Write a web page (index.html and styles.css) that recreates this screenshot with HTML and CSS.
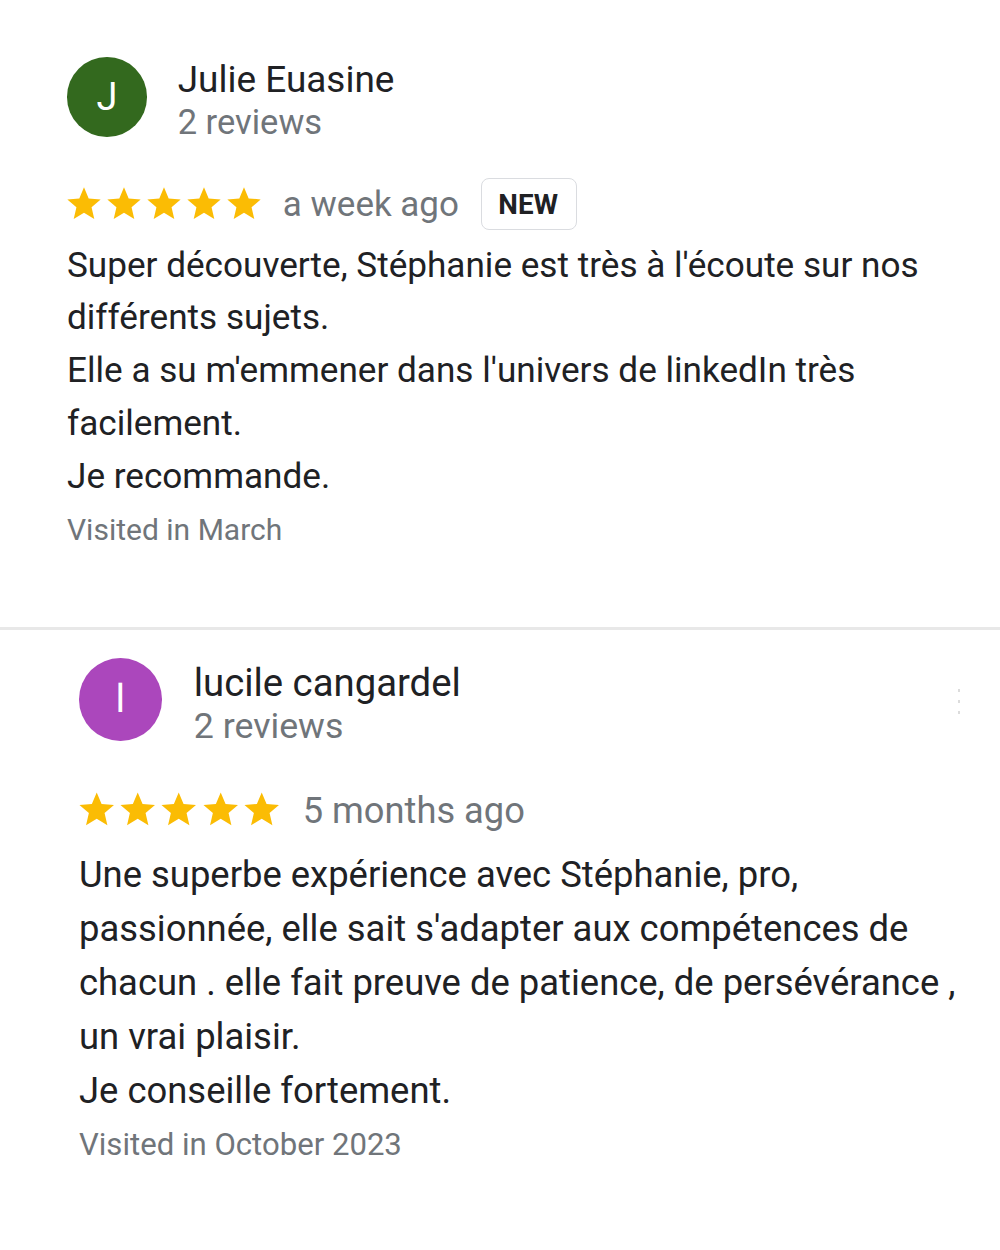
FILE: index.html
```html
<!DOCTYPE html>
<html lang="fr">
<head>
    <meta charset="UTF-8">
    <meta name="viewport" content="width=device-width, initial-scale=1.0">
    <title>Avis</title>
    <link rel="stylesheet" href="styles.css">
</head>
<body>

<div class="review">
    <div class="review-head">
        <div class="avatar avatar-green">J</div>
        <div class="author">
            <div class="author-name">Julie Euasine</div>
            <div class="author-count">2 reviews</div>
        </div>
    </div>
    <div class="rating">
        <div class="stars">
            <svg viewBox="0 0 24 24"><path d="M12 17.27L18.18 21l-1.64-7.03L22 9.24l-7.19-.61L12 2 9.19 8.63 2 9.24l5.46 4.73L5.82 21z"/></svg>
            <svg viewBox="0 0 24 24"><path d="M12 17.27L18.18 21l-1.64-7.03L22 9.24l-7.19-.61L12 2 9.19 8.63 2 9.24l5.46 4.73L5.82 21z"/></svg>
            <svg viewBox="0 0 24 24"><path d="M12 17.27L18.18 21l-1.64-7.03L22 9.24l-7.19-.61L12 2 9.19 8.63 2 9.24l5.46 4.73L5.82 21z"/></svg>
            <svg viewBox="0 0 24 24"><path d="M12 17.27L18.18 21l-1.64-7.03L22 9.24l-7.19-.61L12 2 9.19 8.63 2 9.24l5.46 4.73L5.82 21z"/></svg>
            <svg viewBox="0 0 24 24"><path d="M12 17.27L18.18 21l-1.64-7.03L22 9.24l-7.19-.61L12 2 9.19 8.63 2 9.24l5.46 4.73L5.82 21z"/></svg>
        </div>
        <span class="date">a week ago</span>
        <span class="badge">NEW</span>
    </div>
    <p class="text">Super découverte, Stéphanie est très à l'écoute sur nos différents sujets.<br>Elle a su m'emmener dans l'univers de linkedIn très facilement.<br>Je recommande.</p>
    <div class="visited">Visited in March</div>
</div>

<div class="review review-second">
    <div class="review-head">
        <div class="avatar avatar-purple">l</div>
        <div class="author">
            <div class="author-name">lucile cangardel</div>
            <div class="author-count">2 reviews</div>
        </div>
        <div class="menu"><span></span><span></span><span></span></div>
    </div>
    <div class="rating">
        <div class="stars">
            <svg viewBox="0 0 24 24"><path d="M12 17.27L18.18 21l-1.64-7.03L22 9.24l-7.19-.61L12 2 9.19 8.63 2 9.24l5.46 4.73L5.82 21z"/></svg>
            <svg viewBox="0 0 24 24"><path d="M12 17.27L18.18 21l-1.64-7.03L22 9.24l-7.19-.61L12 2 9.19 8.63 2 9.24l5.46 4.73L5.82 21z"/></svg>
            <svg viewBox="0 0 24 24"><path d="M12 17.27L18.18 21l-1.64-7.03L22 9.24l-7.19-.61L12 2 9.19 8.63 2 9.24l5.46 4.73L5.82 21z"/></svg>
            <svg viewBox="0 0 24 24"><path d="M12 17.27L18.18 21l-1.64-7.03L22 9.24l-7.19-.61L12 2 9.19 8.63 2 9.24l5.46 4.73L5.82 21z"/></svg>
            <svg viewBox="0 0 24 24"><path d="M12 17.27L18.18 21l-1.64-7.03L22 9.24l-7.19-.61L12 2 9.19 8.63 2 9.24l5.46 4.73L5.82 21z"/></svg>
        </div>
        <span class="date">5 months ago</span>
    </div>
    <p class="text">Une superbe expérience avec Stéphanie, pro, passionnée, elle sait s'adapter aux compétences de chacun . elle fait preuve de patience, de persévérance , un vrai plaisir.<br>Je conseille fortement.</p>
    <div class="visited">Visited in October 2023</div>
</div>

</body>
</html>
```

FILE: styles.css
```css
body {
    margin: 0;
    font-family: Roboto, "Liberation Sans", sans-serif;
    background: #fff;
    color: #202124;
}
.review {
    font-size: 33px;
    padding: 57px 40px 77px 67px;
    border-bottom: 3px solid #e8e8e8;
}
.review-second {
    font-size: 34.2px;
    padding: 28px 40px 40px 79px;
    border-bottom: none;
}
.review-head {
    display: flex;
    align-items: flex-start;
    gap: 0.94em;
    position: relative;
}
.avatar {
    width: 2.1em;
    height: 2.1em;
    border-radius: 50%;
    color: #fff;
    font-size: 1.15em;
    display: flex;
    align-items: center;
    justify-content: center;
    flex-shrink: 0;
}
.avatar-green {
    background-color: #33691e;
}
.avatar-purple {
    background-color: #ab47bc;
}
.author {
    margin-top: 0.06em;
}
.review-second .author {
    margin-top: 0.1em;
}
.author-name {
    font-size: 1.12em;
    line-height: 1.14;
}
.author-count {
    font-size: 1.045em;
    line-height: 1.22;
    color: #70757a;
}
.menu {
    position: absolute;
    right: 0;
    top: 0.9em;
    display: flex;
    flex-direction: column;
    gap: 8px;
}
.menu span {
    width: 2px;
    height: 3px;
    background: #dcdcdc;
}
.rating {
    display: flex;
    align-items: center;
    margin-top: 1.05em;
    height: 1.6em;
}
.review-second .rating {
    margin-top: 1em;
}
.stars {
    display: flex;
    margin-left: -0.1em;
}
.stars svg {
    width: 1.212em;
    height: 1.212em;
    fill: #fbbc04;
}
.date {
    font-size: 1.06em;
    color: #70757a;
    margin-left: 0.55em;
}
.badge {
    margin-left: 0.8em;
    border: 1.5px solid #dadce0;
    border-radius: 8px;
    font-size: 0.84em;
    font-weight: 700;
    padding: 0.32em 0.62em 0.3em 0.58em;
    line-height: 1.2;
    letter-spacing: 0.01em;
}
.text {
    margin: 0.23em 0 0;
    font-size: 1.065em;
    line-height: 1.502;
    max-width: 900px;
}
.review-second .text {
    margin-top: 0.28em;
    line-height: 1.483;
}
.visited {
    margin-top: 6px;
    font-size: 0.91em;
    line-height: 1.38;
    color: #70757a;
}
```
